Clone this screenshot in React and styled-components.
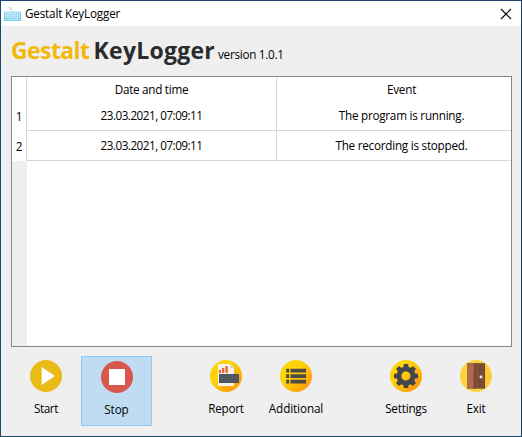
import React from 'react';
import styled, { createGlobalStyle } from 'styled-components';

const GlobalStyle = createGlobalStyle`
  * { box-sizing: border-box; }
  body { margin: 0; background: #efefef; }
`;

const Window = styled.main`
  width: 522px;
  height: 437px;
  display: flex;
  flex-direction: column;
  border: 1px solid #1c4966;
  border-top-color: #1b456e;
  border-right-color: #1f3f6b;
  background: #efefef;
  color: #000;
  font: 11.7px/16px "Open Sans", "Noto Sans", sans-serif;
  white-space: nowrap;
  overflow: hidden;
`;

const TitleBar = styled.header`
  height: 25px;
  flex: none;
  display: flex;
  align-items: center;
  padding: 0 9px 0 3px;
  background: #fff;
`;

const Caption = styled.span`
  flex: 1;
  margin: -2px 0 0 4px;
  letter-spacing: -0.18px;
`;

const CloseButton = styled.button`
  display: flex;
  padding: 0;
  border: 0;
  background: none;
`;

const Brand = styled.h1`
  height: 50px;
  flex: none;
  display: flex;
  align-items: baseline;
  margin: 0;
  padding: 7px 0 0 10px;
  font-size: 23px;
  line-height: 34px;
  font-weight: 700;
`;

const BrandWord = styled.span`
  color: ${(p) => p.$color};
  letter-spacing: ${(p) => p.$track}px;
  margin-right: ${(p) => p.$gap}px;
`;

const Version = styled.small`
  font-size: 11.7px;
  font-weight: 400;
  letter-spacing: -0.26px;
`;

const LogTable = styled.section`
  height: 271px;
  flex: none;
  margin: 0 9px 0 10px;
  display: grid;
  grid-template-columns: 15px 250px 1fr;
  grid-template-rows: 24px 30px 30px 1fr;
  border: 1px solid #828790;
  background: #fff;
`;

const Cell = styled.div`
  display: flex;
  align-items: center;
  justify-content: center;
  border-right: 1px solid #d8d8d8;
  border-bottom: ${(p) => (p.$ruled ? 1 : 0)}px solid #d8d8d8;
  padding-bottom: ${(p) => (p.$ruled ? 1 : 0)}px;
  letter-spacing: ${(p) => p.$track || 0}px;
`;

const EventCell = styled(Cell)`
  border-right: 0;
  padding-left: 15px;
`;

const RowNumber = styled(Cell)`
  border-bottom: 0;
`;

const Gutter = styled.div`
  background: #efefef;
`;

const Toolbar = styled.nav`
  flex: none;
  display: flex;
  margin: 9px 10px 0;
  height: 70px;
`;

const ToolGroup = styled.div`
  display: flex;
  margin-right: ${(p) => p.$gap}px;
`;

const ToolButton = styled.button`
  width: ${(p) => (p.$active ? 71 : 70)}px;
  height: 70px;
  display: flex;
  flex-direction: column;
  align-items: center;
  gap: ${(p) => (p.$active ? 8 : 8)}px;
  padding: 4px 0 0;
  border: ${(p) => (p.$active ? '1px solid #90c8f6' : '0')};
  background: ${(p) => (p.$active ? '#c0dcf3' : 'transparent')};
  color: #000;
  font: inherit;
  letter-spacing: ${(p) => p.$track}px;
`;

const Glyph = styled.svg`
  display: block;
  flex: none;
`;

const AppIcon = () => (
  <Glyph width="17" height="16" viewBox="0 0 17 16">
    <path d="M5 1l3 3M8 1L6 4M8 4v2" stroke="#d8dadb" strokeWidth="1.2" fill="none" />
    <path d="M1 6h15v8H1z" fill="#b9e6f6" />
    <path d="M.5 6v8.5h16V6" stroke="#73cdec" fill="none" />
    <path d="M.5 6h16" stroke="#9bdcf2" />
    <path d="M2 8.5h13M2 10.5h13" stroke="#8ed6ee" strokeDasharray="1 1" />
    <path d="M1 12.5h3M5 12.5h7M13 12.5h3" stroke="#83cfea" />
  </Glyph>
);

const CloseIcon = () => (
  <Glyph width="12" height="12" viewBox="0 0 12 12">
    <path d="M1 1l10 10M11 1L1 11" stroke="#000" strokeWidth="1.15" />
  </Glyph>
);

const Gradient = ({ id, from = '#fed30a', to = '#ff9e09' }) => (
  <linearGradient id={id} x1="0.15" y1="0.15" x2="0.85" y2="0.85">
    <stop offset="0.35" stopColor={from} />
    <stop offset="1" stopColor={to} />
  </linearGradient>
);

const StartIcon = () => (
  <Glyph width="32" height="32" viewBox="0 0 32 32">
    <circle cx="16" cy="16" r="16" fill="#eaba18" />
    <path d="M11.6 7v18L25 16z" fill="#fff" />
  </Glyph>
);

const StopIcon = () => (
  <Glyph width="32" height="32" viewBox="0 0 32 32">
    <circle cx="16" cy="16" r="16" fill="#d8594b" />
    <path d="M8 8h16v16H8z" fill="#fff" />
  </Glyph>
);

const ReportIcon = () => (
  <Glyph width="32" height="32" viewBox="0 0 32 32">
    <defs><Gradient id="report" /></defs>
    <circle cx="16" cy="16" r="16" fill="url(#report)" />
    <path d="M24 8l7 11a16 16 0 0 1-14 13l-8-6z" fill="#ffa60c" opacity=".65" />
    <path d="M8 4h12l4 4v18H8z" fill="#f5f3ef" />
    <path d="M20 4v4h4z" fill="#d6d4d3" />
    <path d="M9 10h2v3H9zM12 8h2.3v5H12zM15.5 6h2.3v7h-2.3z" fill="#f2622a" />
    <path d="M9 14h20v9H9z" fill="#4c525c" />
    <path d="M10 16h18M10 18.5h18M10 21h3M14 21h9M24 21h4" stroke="#6b717a" strokeWidth=".8" strokeDasharray="1.5 .8" />
  </Glyph>
);

const ListIcon = () => (
  <Glyph width="32" height="32" viewBox="0 0 32 32">
    <defs><Gradient id="list" /></defs>
    <circle cx="16" cy="16" r="16" fill="url(#list)" />
    <path d="M6.2 8.8h3v3.6h-3zM10.5 8.8H26v3.6H10.5zM6.2 14.3h3v3.6h-3zM10.5 14.3H26v3.6H10.5zM6.2 19.8h3v3.6h-3zM10.5 19.8H26v3.6H10.5z" fill="#4c4b45" />
  </Glyph>
);

const TEETH = [0, 45, 90, 135, 180, 225, 270, 315];

const GearIcon = () => (
  <Glyph width="32" height="32" viewBox="0 0 32 32">
    <defs><Gradient id="gear" /></defs>
    <circle cx="16" cy="16" r="16" fill="url(#gear)" />
    <path d="M24 10l7.5 10a16 16 0 0 1-13 11.8L12 25z" fill="#ffa00c" opacity=".6" />
    <circle cx="16" cy="16" r="7" fill="none" stroke="#43474d" strokeWidth="4.8" />
    {TEETH.map((angle) => (
      <path key={angle} d="M13.4 8l.4-4h4.4l.4 4z" fill="#43474d" transform={`rotate(${angle} 16 16)`} />
    ))}
  </Glyph>
);

const DoorIcon = () => (
  <Glyph width="32" height="32" viewBox="0 0 32 32">
    <circle cx="16" cy="16" r="16" fill="#fdd33b" />
    <path d="M25 5a16 16 0 0 1 0 24z" fill="#f9c83a" />
    <path d="M7 3.2h18v25.4H7z" fill="#66402f" />
    <path d="M7 3.2h8v25.4H7z" fill="#ad6d4c" />
    <path d="M13.5 3.2h2.3v25.4h-2.3z" fill="#7f4c38" />
    <path d="M16 4h8v24h-8z" fill="#80513d" />
    <path d="M18 5h4v9h-4zM18 18h4v9h-4z" fill="#764935" />
    <circle cx="21" cy="17" r="1.4" fill="#f0ece5" />
  </Glyph>
);

const groups = [
  { gap: 39, tools: [{ label: 'Start', Icon: StartIcon, track: -0.4 }, { label: 'Stop', Icon: StopIcon, active: true, track: -0.1 }] },
  { gap: 40, tools: [{ label: 'Report', Icon: ReportIcon, track: -0.25 }, { label: 'Additional', Icon: ListIcon, track: -0.1 }] },
  { gap: 0, tools: [{ label: 'Settings', Icon: GearIcon, track: -0.2 }, { label: 'Exit', Icon: DoorIcon, track: -0.2 }] },
];

const events = [
  { time: '23.03.2021, 07:09:11', text: 'The program is running.' },
  { time: '23.03.2021, 07:09:11', text: 'The recording is stopped.' },
];

export default function App() {
  return (
    <>
      <GlobalStyle />
      <Window>
        <TitleBar>
          <AppIcon />
          <Caption>Gestalt KeyLogger</Caption>
          <CloseButton aria-label="Close"><CloseIcon /></CloseButton>
        </TitleBar>
        <Brand>
          <BrandWord $color="#f2b90c" $track={-0.6} $gap={4.2}>Gestalt</BrandWord>
          <BrandWord $color="#2b2b2b" $track={0.25} $gap={3}>KeyLogger</BrandWord>
          <Version>version 1.0.1</Version>
        </Brand>
        <LogTable>
          <Cell />
          <Cell $track={-0.28}>Date and time</Cell>
          <EventCell $track={-0.2}>Event</EventCell>
          {events.map((event, index) => (
            <React.Fragment key={event.text}>
              <RowNumber>{index + 1}</RowNumber>
              <Cell $ruled $track={-0.5}>{event.time}</Cell>
              <EventCell $ruled $track={-0.24}>{event.text}</EventCell>
            </React.Fragment>
          ))}
          <Gutter />
        </LogTable>
        <Toolbar>
          {groups.map((group) => (
            <ToolGroup key={group.tools[0].label} $gap={group.gap}>
              {group.tools.map(({ label, Icon, active, track }) => (
                <ToolButton key={label} $active={active} $track={track}>
                  <Icon />
                  {label}
                </ToolButton>
              ))}
            </ToolGroup>
          ))}
        </Toolbar>
      </Window>
    </>
  );
}
